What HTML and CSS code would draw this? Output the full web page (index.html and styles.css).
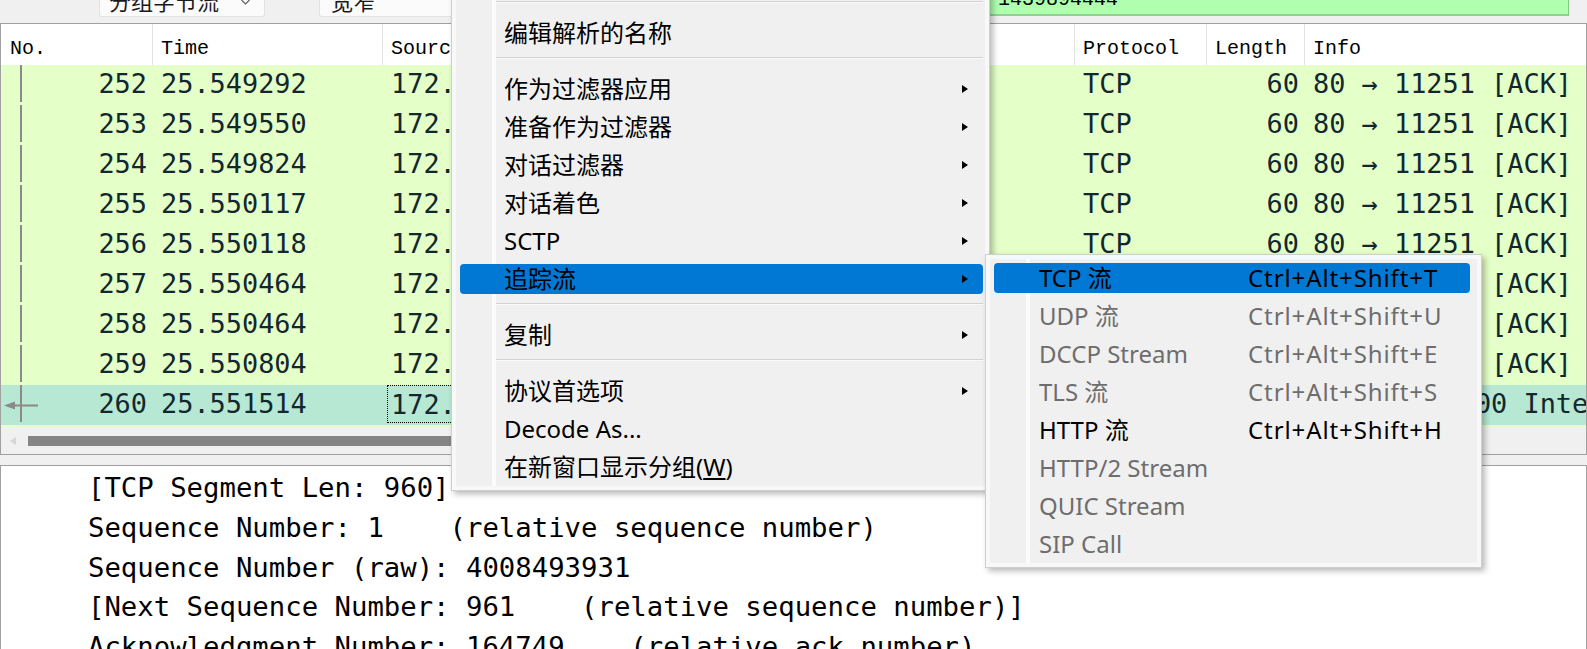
FILE: index.html
```html
<!DOCTYPE html>
<html lang="zh-CN">
<head>
<meta charset="utf-8">
<title>Wireshark</title>
<link rel="stylesheet" href="styles.css">
</head>
<body>
<div class="app">
  <div class="findbar">
    <div class="combo c1"><span class="ctext">分组字节流</span><svg class="chev" width="9" height="5" viewBox="0 0 9 5"><polyline points="0.5,0 4.5,4 8.5,0" fill="none" stroke="#606060" stroke-width="1.2"/></svg></div>
    <div class="combo c2"><span class="ctext">宽窄</span></div>
    <div class="filter"><span class="ftext">1439894444</span></div>
  </div>

  <div class="plist">
    <div class="row head">
      <div class="c no-h">No.</div>
      <div class="c">Time</div>
      <div class="c">Source</div>
      <div class="c">Destination</div>
      <div class="c">Protocol</div>
      <div class="c">Length</div>
      <div class="c last">Info</div>
    </div>
    <div class="rows">
      <div class="row"><div class="c no tree">252</div><div class="c">25.549292</div><div class="c">172.16.20.15</div><div class="c">172.16.20.1</div><div class="c">TCP</div><div class="c num">60</div><div class="c">80 → 11251 [ACK] Seq=1 Ack=961 Win=64240 Len=0</div></div>
      <div class="row"><div class="c no tree">253</div><div class="c">25.549550</div><div class="c">172.16.20.15</div><div class="c">172.16.20.1</div><div class="c">TCP</div><div class="c num">60</div><div class="c">80 → 11251 [ACK] Seq=1 Ack=2421 Win=64240 Len=0</div></div>
      <div class="row"><div class="c no tree">254</div><div class="c">25.549824</div><div class="c">172.16.20.15</div><div class="c">172.16.20.1</div><div class="c">TCP</div><div class="c num">60</div><div class="c">80 → 11251 [ACK] Seq=1 Ack=3881 Win=64240 Len=0</div></div>
      <div class="row"><div class="c no tree">255</div><div class="c">25.550117</div><div class="c">172.16.20.15</div><div class="c">172.16.20.1</div><div class="c">TCP</div><div class="c num">60</div><div class="c">80 → 11251 [ACK] Seq=1 Ack=5341 Win=64240 Len=0</div></div>
      <div class="row"><div class="c no tree">256</div><div class="c">25.550118</div><div class="c">172.16.20.15</div><div class="c">172.16.20.1</div><div class="c">TCP</div><div class="c num">60</div><div class="c">80 → 11251 [ACK] Seq=1 Ack=6801 Win=64240 Len=0</div></div>
      <div class="row"><div class="c no tree">257</div><div class="c">25.550464</div><div class="c">172.16.20.15</div><div class="c">172.16.20.1</div><div class="c">TCP</div><div class="c num">60</div><div class="c">80 → 11251 [ACK] Seq=1 Ack=8261 Win=64240 Len=0</div></div>
      <div class="row"><div class="c no tree">258</div><div class="c">25.550464</div><div class="c">172.16.20.15</div><div class="c">172.16.20.1</div><div class="c">TCP</div><div class="c num">60</div><div class="c">80 → 11251 [ACK] Seq=1 Ack=9721 Win=64240 Len=0</div></div>
      <div class="row"><div class="c no tree">259</div><div class="c">25.550804</div><div class="c">172.16.20.15</div><div class="c">172.16.20.1</div><div class="c">TCP</div><div class="c num">60</div><div class="c">80 → 11251 [ACK] Seq=1 Ack=11181 Win=64240 Len=0</div></div>
      <div class="row sel"><div class="c no tree end"><svg class="back" width="40" height="40" viewBox="0 0 40 40"><polygon points="3,20.5 14,16.5 14,24.5" fill="#8a8a8a"/><rect x="13" y="19.5" width="24" height="2" fill="#8a8a8a"/></svg><span>260</span></div><div class="c">25.551514</div><div class="c focus">172.16.20.15</div><div class="c">172.16.20.1</div><div class="c">HTTP</div><div class="c num">1014</div><div class="c">HTTP/1.1 500 Internal Server Error  (text/html)</div></div>
      <div class="row"><div class="c no">261</div><div class="c">25.551600</div><div class="c">172.16.20.1</div><div class="c">172.16.20.15</div><div class="c">TCP</div><div class="c num">60</div><div class="c">11251 → 80 [ACK] Seq=12641 Ack=961 Win=64240 Len=0</div></div>
    </div>
    <div class="hscroll">
      <svg class="larr" width="6" height="8" viewBox="0 0 6 8"><polygon points="0,4 6,0 6,8" fill="#d6d6d6"/></svg>
      <div class="thumb"></div>
    </div>
  </div>

  <div class="details">
    <div class="dl">[TCP Segment Len: 960]</div>
    <div class="dl">Sequence Number: 1    (relative sequence number)</div>
    <div class="dl">Sequence Number (raw): 4008493931</div>
    <div class="dl">[Next Sequence Number: 961    (relative sequence number)]</div>
    <div class="dl">Acknowledgment Number: 164749    (relative ack number)</div>
  </div>

  <div class="menu main">
    <div class="mbody">
      <div class="mi"><div class="mi-in">分组注释...</div></div>
      <div class="sep"></div>
      <div class="mi"><div class="mi-in">编辑解析的名称</div></div>
      <div class="sep"></div>
      <div class="mi"><div class="mi-in">作为过滤器应用<span class="arrow"></span></div></div>
      <div class="mi"><div class="mi-in">准备作为过滤器<span class="arrow"></span></div></div>
      <div class="mi"><div class="mi-in">对话过滤器<span class="arrow"></span></div></div>
      <div class="mi"><div class="mi-in">对话着色<span class="arrow"></span></div></div>
      <div class="mi"><div class="mi-in">SCTP<span class="arrow"></span></div></div>
      <div class="mi hl"><div class="mi-in">追踪流<span class="arrow"></span></div></div>
      <div class="sep"></div>
      <div class="mi"><div class="mi-in">复制<span class="arrow"></span></div></div>
      <div class="sep"></div>
      <div class="mi"><div class="mi-in">协议首选项<span class="arrow"></span></div></div>
      <div class="mi"><div class="mi-in">Decode As...</div></div>
      <div class="mi"><div class="mi-in">在新窗口显示分组(<u>W</u>)</div></div>
    </div>
  </div>

  <div class="menu sub">
    <div class="mbody">
      <div class="mi hl"><div class="mi-in"><span class="lbl">TCP 流</span><span class="key">Ctrl+Alt+Shift+T</span></div></div>
      <div class="mi dis"><div class="mi-in"><span class="lbl">UDP 流</span><span class="key">Ctrl+Alt+Shift+U</span></div></div>
      <div class="mi dis"><div class="mi-in"><span class="lbl">DCCP Stream</span><span class="key">Ctrl+Alt+Shift+E</span></div></div>
      <div class="mi dis"><div class="mi-in"><span class="lbl">TLS 流</span><span class="key">Ctrl+Alt+Shift+S</span></div></div>
      <div class="mi"><div class="mi-in"><span class="lbl">HTTP 流</span><span class="key">Ctrl+Alt+Shift+H</span></div></div>
      <div class="mi dis"><div class="mi-in"><span class="lbl">HTTP/2 Stream</span></div></div>
      <div class="mi dis"><div class="mi-in"><span class="lbl">QUIC Stream</span></div></div>
      <div class="mi dis"><div class="mi-in"><span class="lbl">SIP Call</span></div></div>
    </div>
  </div>
</div>
</body>
</html>
```

FILE: styles.css
```css
* { box-sizing: border-box; }

body {
  margin: 0;
  width: 1587px;
  height: 649px;
  overflow: hidden;
  background: #f0f0f0;
}

.app {
  position: relative;
  width: 1587px;
  height: 649px;
  overflow: hidden;
}

/* ---------- find bar (mostly clipped at top) ---------- */
.findbar {
  height: 23px;
  display: flex;
  align-items: flex-start;
}

.combo {
  height: 17px;
  overflow: hidden;
  background: #fbfbfb;
  border: 1px solid #e2e2e2;
  border-top: none;
  border-radius: 0 0 3px 3px;
  display: flex;
  align-items: flex-start;
  font-family: "Noto Sans CJK SC", sans-serif;
  font-size: 22px;
  color: #1a1a1a;
}

.c1 { margin-left: 99px; width: 166px; padding-left: 9px; }
.c2 { margin-left: 54px; width: 300px; padding-left: 11px; }

.ctext {
  display: block;
  line-height: 22px;
  margin-top: -11px;
}

.chev { margin-left: auto; margin-right: 14px; margin-top: 0; }

.filter {
  margin-left: auto;
  margin-right: 18px;
  width: 600px;
  height: 16px;
  overflow: hidden;
  background: #afffaf;
  border-right: 1px solid #86c986;
  border-bottom: 2px solid #8fd18f;
  padding-left: 29px;
}

.ftext {
  display: block;
  font-family: "Liberation Mono", monospace;
  font-size: 20px;
  line-height: 20px;
  margin-top: -10px;
  color: #000;
}

/* ---------- packet list ---------- */
.plist {
  height: 432px;
  border: 1px solid #a0a0a0;
  background: #fff;
  display: flex;
  flex-direction: column;
}

.row {
  display: grid;
  grid-template-columns: 152px 230px 318px 374px 132px 98px 1fr;
  height: 40px;
  flex: none;
}

.c {
  display: flex;
  align-items: center;
  white-space: pre;
  overflow: hidden;
  padding-left: 8px;
}

.head {
  height: 41px;
  font-family: "Liberation Mono", monospace;
  font-size: 20px;
  color: #000;
  background: #fff;
}

.head .c {
  border-right: 1px solid #e3e3e3;
  padding-top: 7px;
}

.head .c.last { border-right: none; }
.head .no-h { padding-left: 9px; }

.rows {
  height: 362px;
  overflow: hidden;
  font-family: "DejaVu Sans Mono", monospace;
  font-size: 26.9px;
  color: #12272e;
}

.rows .row {
  background: #e4ffc7;
  padding-bottom: 3px;
}

.rows .row.sel { background: #b6e8d3; }

.no {
  justify-content: flex-end;
  padding-right: 6px;
  padding-left: 0;
}

.tree {
  background-image: linear-gradient(90deg, transparent 19px, #8a8a8a 19px, #8a8a8a 21px, transparent 21px);
  background-size: 100% 43px;
  background-repeat: no-repeat;
}

.no.end { justify-content: space-between; }
.back { flex: none; margin-top: 3px; }

.num {
  justify-content: flex-end;
  padding-right: 6px;
}

.focus {
  border: 1px dotted #000;
  margin: 0 0 -1px 4px;
  padding-left: 3px;
}

.hscroll {
  height: 27px;
  flex: none;
  background: #f0f0f0;
  display: flex;
  align-items: flex-start;
  padding-top: 9px;
}

.larr { margin-left: 9px; margin-top: 1px; flex: none; }

.thumb {
  margin-left: 12px;
  width: 680px;
  height: 10px;
  background: #858585;
}

/* ---------- packet details ---------- */
.details {
  margin-top: 10px;
  height: 200px;
  border: 1px solid #a0a0a0;
  border-bottom: none;
  background: #fff;
  padding: 2px 0 0 87px;
  font-family: "DejaVu Sans Mono", monospace;
  font-size: 27.3px;
  color: #000;
}

.dl {
  height: 39.8px;
  line-height: 39.8px;
  white-space: pre;
}

/* ---------- context menus ---------- */
.menu {
  position: absolute;
  background: #f8f8f8;
  border: 1px solid #cfcfcf;
  padding: 4px;
  box-shadow: 3px 3px 6px rgba(0, 0, 0, 0.28);
  font-family: "Noto Sans", "Noto Sans CJK SC", sans-serif;
  font-size: 24px;
  color: #000;
}

.menu.main { left: 451px; top: -47px; width: 539px; }
.menu.sub { left: 985px; top: 254px; width: 497px; }

.mbody {
  background: linear-gradient(90deg, #f0f0f0 36px, #fbfbfb 36px, #fbfbfb 40px, #f0f0f0 40px);
}

.mi {
  height: 38px;
  padding: 4px 2px 4px 4px;
}

.sub .mi { padding-right: 7px; }

.mi-in {
  height: 30px;
  line-height: 30px;
  border-radius: 4px;
  display: flex;
  align-items: center;
  padding-left: 44px;
  white-space: nowrap;
}

.sub .mi-in { padding-left: 45px; }

.mi.hl .mi-in { background: #0078d4; }

.mi.dis { color: #6d6d6d; }

.arrow {
  margin-left: auto;
  margin-right: 15px;
  width: 0;
  height: 0;
  border-left: 6px solid #000;
  border-top: 4px solid transparent;
  border-bottom: 4px solid transparent;
}

.sep {
  height: 18px;
  padding-top: 5px;
  margin: 0 2px 0 40px;
}

.sep::before {
  content: "";
  display: block;
  height: 1px;
  background: #d2d2d2;
  border-bottom: 1px solid #fafafa;
  box-sizing: content-box;
}

.lbl { width: 209px; flex: none; }
.key { letter-spacing: 0.9px; }
```
